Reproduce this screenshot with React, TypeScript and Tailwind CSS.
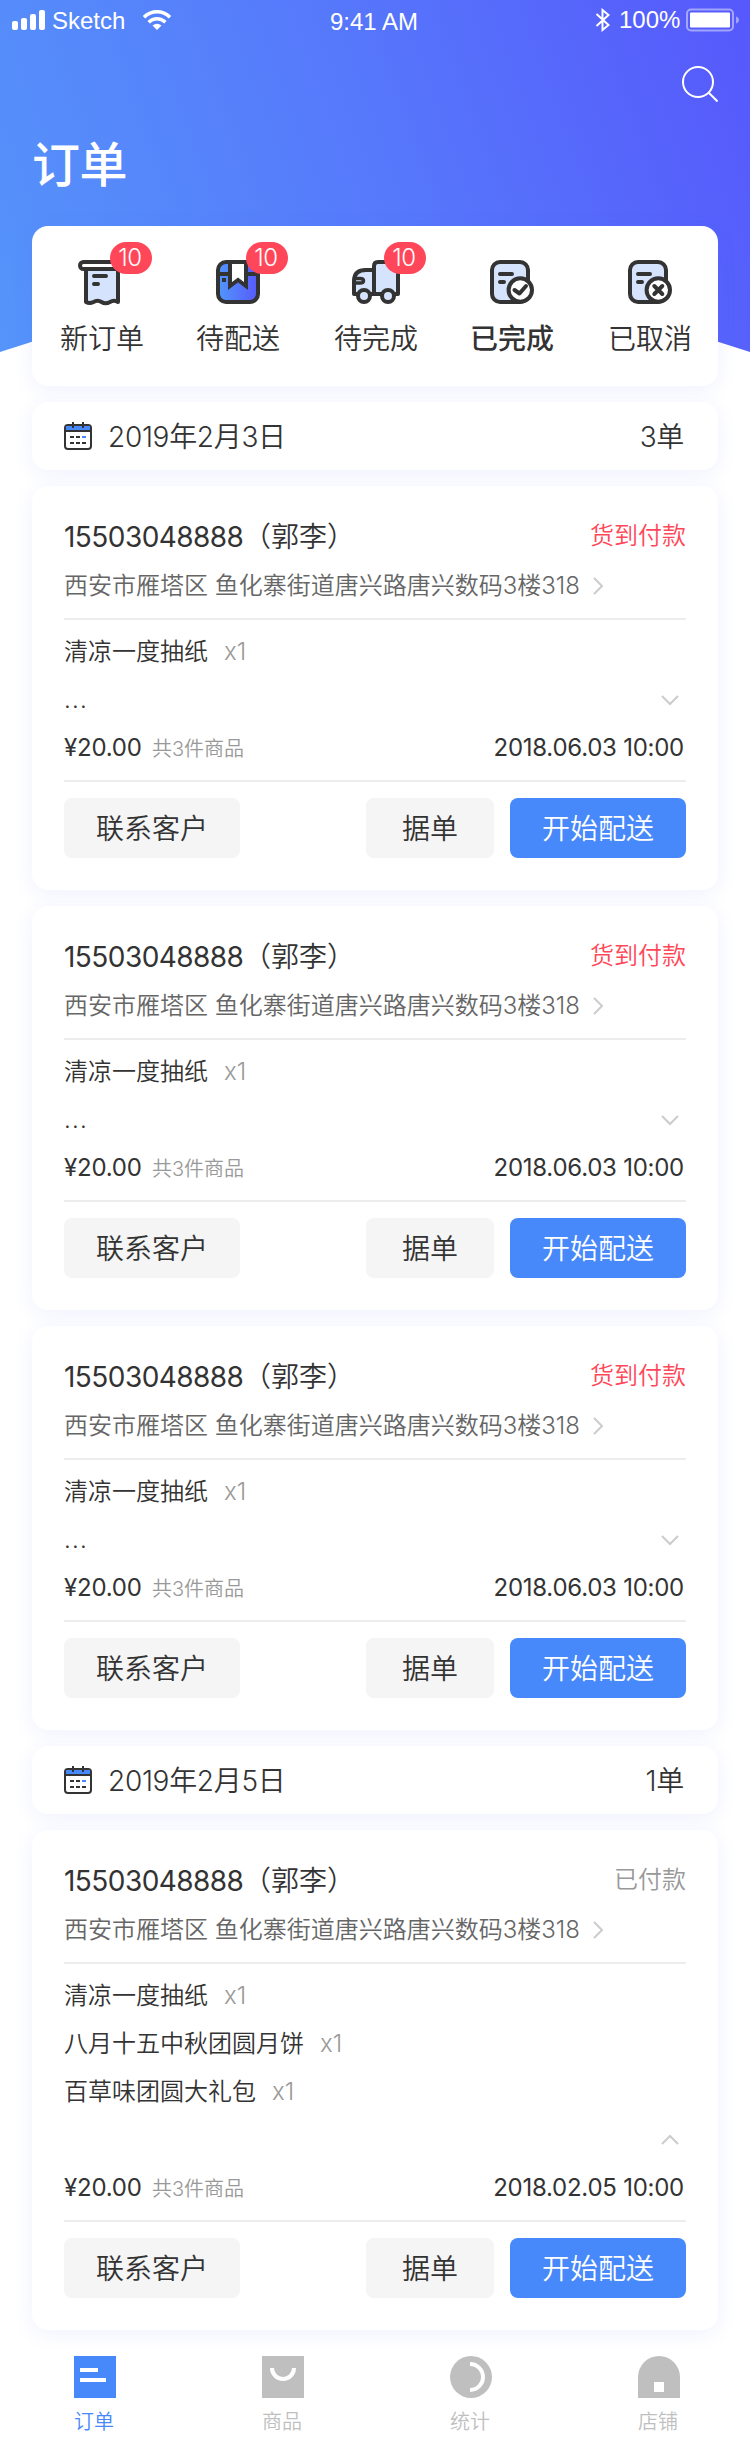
import React from "react";

type Item = { name: string; count: string };

function StatusBar() {
  return (
    <div className="relative flex h-10 items-center justify-between pl-3 pr-[10px] font-['Liberation_Sans',sans-serif] text-[24px] font-normal leading-none text-white">
      <div className="flex items-center">
        <svg className="block h-5 w-[34px]" viewBox="0 0 34 20" fill="#fff">
          <rect x="0" y="11" width="6" height="9" rx="2" />
          <rect x="9" y="8" width="6" height="12" rx="2" />
          <rect x="18" y="4" width="6" height="16" rx="2" />
          <rect x="27" y="0" width="6" height="20" rx="2" />
        </svg>
        <span className="ml-[6px] mt-px w-[73px]">Sketch</span>
        <svg className="ml-[17px] block h-5 w-[30px]" viewBox="0 0 30 20" fill="none" stroke="#fff">
          <path d="M2 7.2C9.5 0 20.500 0 28 7.200" strokeWidth="3.600" />
          <path d="M6.600 12.200C11.500 7.600 18.500 7.600 23.400 12.200" strokeWidth="3.400" />
          <path d="M15 20L10.500 15.400Q15 12 19.500 15.400Z" fill="#fff" stroke="none" />
        </svg>
      </div>
      <div className="absolute left-[330px] top-[10px]">9:41 AM</div>
      <div className="flex items-center">
        <svg className="block h-6 w-4" viewBox="0 0 16 24" fill="none" stroke="#fff" strokeWidth="2">
          <path d="M1.500 6L13.500 17L7.500 22V2L13.500 7L1.500 18" />
        </svg>
        <span className="ml-[8px] w-[61px]">100%</span>
        <svg className="ml-[6px] block h-6 w-[54px]" viewBox="0 0 54 24" fill="none">
          <rect x="1" y="1.500" width="46" height="21" rx="4" stroke="#fff" strokeOpacity=".45" strokeWidth="2" />
          <rect x="4" y="4.500" width="40" height="15" rx="1" fill="#fff" />
          <path d="M50 8.500Q53 9.500 53 12T50 15.500Z" fill="#fff" fillOpacity=".45" />
        </svg>
      </div>
    </div>
  );
}

const ink = "#333";
const pale = "#d6e3fc";

function NewOrderIcon() {
  return (
    <svg className="block size-12" viewBox="0 0 48 48" fill="none" stroke={ink} strokeWidth="4" strokeLinejoin="round" strokeLinecap="round">
      <path d="M8 8H40V44Q36 41.500 32 44Q27.500 46.500 23.500 44Q19.500 41.500 15.500 44Q11.500 46 8 44Z" fill={pale} />
      <rect x="2" y="4" width="44" height="7" rx="3.500" fill="#fff" />
      <path d="M16 18H28M16 26H20" />
    </svg>
  );
}

function PackageIcon() {
  return (
    <svg className="block size-12" viewBox="0 0 48 48" fill="none">
      <defs>
        <linearGradient id="pkg" x1="0" y1="0" x2="1" y2="0">
          <stop stopColor="#5196fc" />
          <stop offset="1" stopColor="#575afb" />
        </linearGradient>
      </defs>
      <rect x="4" y="4" width="40" height="40" rx="8" fill="url(#pkg)" stroke={ink} strokeWidth="4" />
      <path d="M4 16H44" stroke={ink} strokeWidth="4" />
      <path d="M16 4V28L24 22L32 28V4Z" fill="#fff" stroke={ink} strokeWidth="4" />
      <rect x="8" y="20" width="4" height="4" fill={ink} />
    </svg>
  );
}

function TruckIcon() {
  return (
    <svg className="block size-12" viewBox="0 0 48 48" fill={pale} stroke={ink} strokeWidth="4" strokeLinejoin="round" strokeLinecap="round">
      <path d="M22 8Q22 4 26 4H42Q46 4 46 8V36H22Z" />
      <path d="M22 12H14Q2 12 2 23V36H22Z" />
      <path d="M3 20.500H8Q11.500 20.500 11.500 22.750T8 25H3" fill="none" strokeWidth="3.500" />
      <circle cx="12" cy="38" r="6" />
      <circle cx="36" cy="38" r="6" />
    </svg>
  );
}

function DoneIcon({ cancelled = false }: { cancelled?: boolean }) {
  return (
    <svg className="block size-12" viewBox="0 0 48 48" fill="none" stroke={ink} strokeWidth="4" strokeLinecap="round" strokeLinejoin="round">
      <rect x="4" y="4" width="36" height="40" rx="8" fill={pale} />
      <path d="M12 16H24M12 24H16" />
      <circle cx="32.300" cy="32" r="11.700" fill="#fff" />
      {cancelled ? <path d="M28.300 28L36.300 36M36.300 28L28.300 36" /> : <path d="M26.500 32L31.500 35.500L38 28" />}
    </svg>
  );
}

const tabs = [
  { label: "新订单", icon: <NewOrderIcon />, badge: "10" },
  { label: "待配送", icon: <PackageIcon />, badge: "10" },
  { label: "待完成", icon: <TruckIcon />, badge: "10" },
  { label: "已完成", icon: <DoneIcon />, active: true },
  { label: "已取消", icon: <DoneIcon cancelled /> },
];

const card = "rounded-2xl bg-white shadow-[0_4px_20px_rgba(87,107,251,0.09)]";

function Tabs() {
  return (
    <div className={`${card} grid h-40 grid-cols-[136px_138px_136px_138px_88px] pl-[26px] pt-8`}>
      {tabs.map((t) => (
        <div key={t.label} className="relative flex w-[88px] flex-col items-center">
          {t.icon}
          <span className={`mt-[13px] whitespace-nowrap text-[28px] leading-10 ${t.active ? "font-medium" : ""}`}>{t.label}</span>
          {t.badge && (
            <span className="absolute left-[52px] top-[-16px] flex h-8 w-[42px] items-center justify-center rounded-full bg-[#ff4759] pr-[2px] text-[24px] leading-none tracking-[-0.3px] text-white">{t.badge}</span>
          )}
        </div>
      ))}
    </div>
  );
}

function DateBar({ date, total }: { date: string; total: string }) {
  return (
    <div className={`${card} flex h-[68px] items-center px-8 text-[28px] tracking-[-0.3px]`}>
      <svg className="block h-7 w-7" viewBox="0 0 28 28" fill="none">
        <rect x="1" y="3" width="26" height="24" rx="3" fill="#fff" stroke={ink} strokeWidth="2" />
        <path d="M2 4H26V8H2Z" fill="#4788fa" />
        <path d="M1 9H27M9 0V6M19 0V6" stroke={ink} strokeWidth="2" />
        <path d="M6 15H10M12 15H16M6 21H10M12 21H16M18 21H22" stroke={ink} strokeWidth="2" />
        <path d="M18 15H22" stroke="#4788fa" strokeWidth="2" />
      </svg>
      <span className="ml-4 mt-[2px]">{date}</span>
      <span className="ml-auto mr-[2px] mt-[2px]">{total}</span>
    </div>
  );
}

function Chevron({ d, className }: { d: string; className: string }) {
  return (
    <svg className={`block size-5 ${className}`} viewBox="0 0 20 20" fill="none" stroke="#ccc" strokeWidth="2">
      <path d={d} />
    </svg>
  );
}

function OrderCard({ items, time, paid = false, expanded = false }: { items: Item[]; time: string; paid?: boolean; expanded?: boolean }) {
  return (
    <div className={`${card} px-8 pb-8 pt-[30px] text-[24px]`}>
      <div className="flex h-10 items-center justify-between">
        <span className="mt-[2px] flex text-[28px]">
          <span className="w-[179px] font-normal tracking-[-0.55px]">15503048888</span>
          <span>（郭李）</span>
        </span>
        <span className={paid ? "text-[#999]" : "text-[#ff4759]"}>{paid ? "已付款" : "货到付款"}</span>
      </div>
      <div className="mt-[13px] flex h-[34px] items-center text-[#666]">
        <span className="whitespace-nowrap">西安市雁塔区 鱼化寨街道唐兴路唐兴数码3楼318</span>
        <Chevron className="ml-2" d="M6 2L14 10L6 18" />
      </div>
      <div className="mt-[15px] h-[2px] bg-[#ededed]" />
      <div className="mt-2">
        {items.map((item) => (
          <div key={item.name} className="flex h-12 items-center">
            <span>{item.name}</span>
            <span className="ml-4 text-[#999]">{item.count}</span>
          </div>
        ))}
        <div className="flex h-12 items-center justify-between">
          <span className="tracking-[1.200px]">{expanded ? "" : "..."}</span>
          <Chevron className="mr-[6px]" d={expanded ? "M2 14L10 6L18 14" : "M2 6L10 14L18 6"} />
        </div>
        <div className="flex h-12 items-center">
          <span className="w-[78px] font-normal tracking-[-0.2px]">¥20.00</span>
          <span className="ml-[10px] mt-[2px] text-[20px] text-[#999]">共3件商品</span>
          <span className="ml-auto mr-[2px] font-normal tracking-[-0.25px]">{time}</span>
        </div>
      </div>
      <div className="mt-[8px] h-[2px] bg-[#ededed]" />
      <div className="mt-4 flex gap-4 text-[28px]">
        <button className="h-[60px] w-44 rounded-lg bg-[#f5f5f5] pt-[2px]">联系客户</button>
        <button className="ml-auto h-[60px] w-32 rounded-lg bg-[#f5f5f5] pt-[2px]">据单</button>
        <button className="h-[60px] w-44 rounded-lg bg-[#4788fa] pt-[2px] text-white">开始配送</button>
      </div>
    </div>
  );
}

const nav = [
  { label: "订单", active: true, icon: <><path d="M0 0H42V42H0Z" fill="#4788fa" /><path d="M6 14H24M6 24H32" stroke="#fff" strokeWidth="4" /></> },
  { label: "商品", icon: <><path d="M0 0H42V42H0Z" fill="#bfbfbf" /><path d="M10 12A11 11 0 0 0 32 12" stroke="#fff" strokeWidth="4" /></> },
  { label: "统计", icon: <><circle cx="21" cy="21" r="21" fill="#bfbfbf" /><path d="M20 8A13 13 0 0 1 20 34" stroke="#fff" strokeWidth="4" /></> },
  { label: "店铺", icon: <><path d="M0 42V21A21 21 0 0 1 42 21V42Z" fill="#bfbfbf" /><path d="M16 26H26V36H16Z" fill="#fff" /></> },
];

function BottomNav() {
  return (
    <nav className="flex h-[114px] justify-between pl-[74px] pr-[70px] pt-[26px]">
      {nav.map((n) => (
        <div key={n.label} className={`flex w-[42px] flex-col items-center text-[20px] ${n.active ? "text-[#4788fa]" : "text-[#bfbfbf]"}`}>
          <svg className="block size-[42px] shrink-0" viewBox="0 0 42 42" fill="none">{n.icon}</svg>
          <span className="mr-[2px] mt-[10px] whitespace-nowrap leading-7">{n.label}</span>
        </div>
      ))}
    </nav>
  );
}

const single: Item[] = [{ name: "清凉一度抽纸", count: "x1" }];
const several: Item[] = [...single, { name: "八月十五中秋团圆月饼", count: "x1" }, { name: "百草味团圆大礼包", count: "x1" }];

export default function App() {
  return (
    <div className="relative isolate h-[2444px] w-[750px] overflow-hidden bg-white font-['Inter','Noto_Sans_CJK_SC',sans-serif] font-[350] text-[#333]">
      <div className="absolute inset-x-0 top-0 -z-10 h-[352px] bg-[linear-gradient(70deg,#5594fa_0%,#5679fb_50%,#5658fb_100%)] [clip-path:polygon(0_0,100%_0,100%_100%,50%_66%,0_100%)]" />
      <StatusBar />
      <header className="h-[186px] px-8 text-white">
        <div className="flex justify-end pt-[26px]">
          <svg className="block h-[38px] w-[38px]" viewBox="0 0 38 38" fill="none" stroke="#fff" strokeWidth="2">
            <circle cx="18" cy="16" r="15" />
            <path d="M28.500 26.500L37.500 35.500" />
          </svg>
        </div>
        <h1 className="mt-[28px] text-[48px] font-medium leading-[66px] tracking-[-0.5px]">订单</h1>
      </header>
      <main className="flex flex-col gap-4 px-8">
        <Tabs />
        <DateBar date="2019年2月3日" total="3单" />
        <OrderCard items={single} time="2018.06.03 10:00" />
        <OrderCard items={single} time="2018.06.03 10:00" />
        <OrderCard items={single} time="2018.06.03 10:00" />
        <DateBar date="2019年2月5日" total="1单" />
        <OrderCard items={several} time="2018.02.05 10:00" paid expanded />
      </main>
      <BottomNav />
    </div>
  );
}
